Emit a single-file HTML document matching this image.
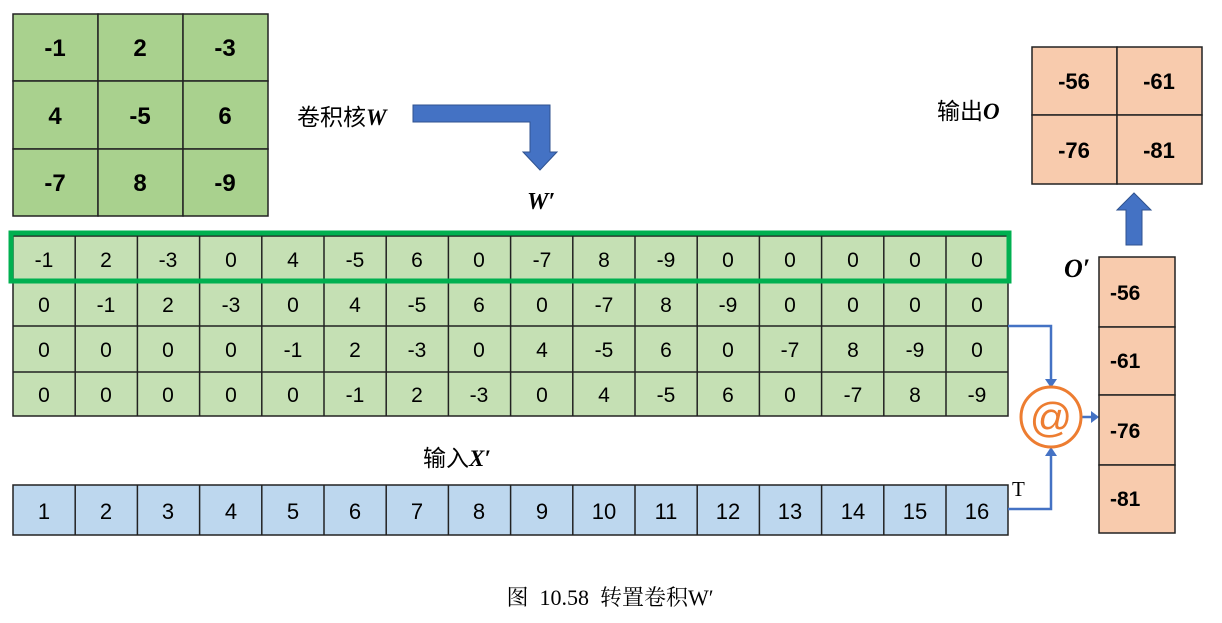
<!DOCTYPE html>
<html><head><meta charset="utf-8"><style>
body{margin:0;background:#fff;width:1222px;height:618px;overflow:hidden}
svg text{font-family:"Liberation Sans","Noto Sans CJK SC",sans-serif}
svg .s{font-family:"Liberation Serif","Noto Serif CJK SC",serif}
</style></head><body>
<svg width="1222" height="618" viewBox="0 0 1222 618" xmlns="http://www.w3.org/2000/svg">
<g stroke="#222" stroke-width="1.5" fill="#a9d18e">
<rect x="13" y="14" width="85" height="67"/><rect x="98" y="14" width="85" height="67"/><rect x="183" y="14" width="85" height="67"/>
<rect x="13" y="81" width="85" height="68"/><rect x="98" y="81" width="85" height="68"/><rect x="183" y="81" width="85" height="68"/>
<rect x="13" y="149" width="85" height="67"/><rect x="98" y="149" width="85" height="67"/><rect x="183" y="149" width="85" height="67"/>
</g>
<g font-size="24" font-weight="bold" text-anchor="middle">
<text x="55" y="56">-1</text><text x="140" y="56">2</text><text x="225" y="56">-3</text>
<text x="55" y="124">4</text><text x="140" y="124">-5</text><text x="225" y="124">6</text>
<text x="55" y="191">-7</text><text x="140" y="191">8</text><text x="225" y="191">-9</text>
</g>
<text x="297" y="125" font-size="23">卷积核<tspan class="s" font-weight="bold" font-style="italic">W</tspan></text>
<path d="M413 105 H550 V152 H557 L540 170 L523 152 H530 V122 H413 Z" fill="#4472c4" stroke="#2f528f" stroke-width="1"/>
<text class="s" x="527" y="209" font-size="24" font-weight="bold" font-style="italic">W′</text>
<rect x="13" y="236" width="995" height="180" fill="#c5e0b4" stroke="#222" stroke-width="1.5"/>
<g stroke="#222" stroke-width="1.5">
<path d="M13 282H1008M13 326H1008M13 372H1008"/>
<path d="M75.2 236V416M137.4 236V416M199.6 236V416M261.8 236V416M324 236V416M386.2 236V416M448.4 236V416M510.6 236V416M572.8 236V416M635 236V416M697.2 236V416M759.4 236V416M821.6 236V416M883.8 236V416M946 236V416"/>
</g>
<rect x="11" y="233" width="998" height="48" fill="none" stroke="#00b050" stroke-width="5"/>
<g font-size="21" text-anchor="middle">
<text y="267"><tspan x="44">-1</tspan><tspan x="106">2</tspan><tspan x="168">-3</tspan><tspan x="231">0</tspan><tspan x="293">4</tspan><tspan x="355">-5</tspan><tspan x="417">6</tspan><tspan x="479">0</tspan><tspan x="542">-7</tspan><tspan x="604">8</tspan><tspan x="666">-9</tspan><tspan x="728">0</tspan><tspan x="790">0</tspan><tspan x="853">0</tspan><tspan x="915">0</tspan><tspan x="977">0</tspan></text>
<text y="312"><tspan x="44">0</tspan><tspan x="106">-1</tspan><tspan x="168">2</tspan><tspan x="231">-3</tspan><tspan x="293">0</tspan><tspan x="355">4</tspan><tspan x="417">-5</tspan><tspan x="479">6</tspan><tspan x="542">0</tspan><tspan x="604">-7</tspan><tspan x="666">8</tspan><tspan x="728">-9</tspan><tspan x="790">0</tspan><tspan x="853">0</tspan><tspan x="915">0</tspan><tspan x="977">0</tspan></text>
<text y="357"><tspan x="44">0</tspan><tspan x="106">0</tspan><tspan x="168">0</tspan><tspan x="231">0</tspan><tspan x="293">-1</tspan><tspan x="355">2</tspan><tspan x="417">-3</tspan><tspan x="479">0</tspan><tspan x="542">4</tspan><tspan x="604">-5</tspan><tspan x="666">6</tspan><tspan x="728">0</tspan><tspan x="790">-7</tspan><tspan x="853">8</tspan><tspan x="915">-9</tspan><tspan x="977">0</tspan></text>
<text y="402"><tspan x="44">0</tspan><tspan x="106">0</tspan><tspan x="168">0</tspan><tspan x="231">0</tspan><tspan x="293">0</tspan><tspan x="355">-1</tspan><tspan x="417">2</tspan><tspan x="479">-3</tspan><tspan x="542">0</tspan><tspan x="604">4</tspan><tspan x="666">-5</tspan><tspan x="728">6</tspan><tspan x="790">0</tspan><tspan x="853">-7</tspan><tspan x="915">8</tspan><tspan x="977">-9</tspan></text>
</g>
<text x="423" y="466" font-size="23">输入<tspan class="s" font-weight="bold" font-style="italic">X′</tspan></text>
<rect x="13" y="485" width="995" height="50" fill="#bdd7ee" stroke="#222" stroke-width="1.5"/>
<path d="M75.2 485V535M137.4 485V535M199.6 485V535M261.8 485V535M324 485V535M386.2 485V535M448.4 485V535M510.6 485V535M572.8 485V535M635 485V535M697.2 485V535M759.4 485V535M821.6 485V535M883.8 485V535M946 485V535" stroke="#222" stroke-width="1.5"/>
<text y="519" font-size="22" text-anchor="middle"><tspan x="44">1</tspan><tspan x="106">2</tspan><tspan x="168">3</tspan><tspan x="231">4</tspan><tspan x="293">5</tspan><tspan x="355">6</tspan><tspan x="417">7</tspan><tspan x="479">8</tspan><tspan x="542">9</tspan><tspan x="604">10</tspan><tspan x="666">11</tspan><tspan x="728">12</tspan><tspan x="790">13</tspan><tspan x="853">14</tspan><tspan x="915">15</tspan><tspan x="977">16</tspan></text>
<text class="s" x="1012" y="496" font-size="21">T</text>
<g stroke="#4472c4" stroke-width="2.5" fill="none">
<path d="M1008 326H1051V380"/><path d="M1008 509H1051V455"/><path d="M1082 417H1092"/>
</g>
<g fill="#4472c4">
<path d="M1045 379H1057L1051 388Z"/><path d="M1045 456H1057L1051 447Z"/><path d="M1091 411V423L1099 417Z"/>
</g>
<circle cx="1051" cy="417" r="30" fill="#fff" stroke="#ed7d31" stroke-width="3"/>
<text x="1051" y="432" font-size="42" fill="#ed7d31" text-anchor="middle">@</text>
<text class="s" x="1064" y="277" font-size="26" font-weight="bold" font-style="italic">O′</text>
<g stroke="#222" stroke-width="1.5" fill="#f8cbad">
<rect x="1099" y="257" width="76" height="70"/><rect x="1099" y="327" width="76" height="68"/><rect x="1099" y="395" width="76" height="70"/><rect x="1099" y="465" width="76" height="68"/>
</g>
<g font-size="21" font-weight="bold"><text x="1110" y="300">-56</text><text x="1110" y="368">-61</text><text x="1110" y="438">-76</text><text x="1110" y="506">-81</text></g>
<path d="M1126 245V210H1117L1134 193L1151 210H1142V245Z" fill="#4472c4" stroke="#2f528f" stroke-width="1"/>
<g stroke="#222" stroke-width="1.5" fill="#f8cbad">
<rect x="1032" y="47" width="85" height="68"/><rect x="1117" y="47" width="85" height="68"/><rect x="1032" y="115" width="85" height="69"/><rect x="1117" y="115" width="85" height="69"/>
</g>
<g font-size="22" font-weight="bold" text-anchor="middle"><text x="1074" y="89">-56</text><text x="1159" y="89">-61</text><text x="1074" y="158">-76</text><text x="1159" y="158">-81</text></g>
<text x="937" y="119" font-size="23">输出<tspan class="s" font-weight="bold" font-style="italic">O</tspan></text>
<text class="s" x="610" y="605" font-size="22" text-anchor="middle" xml:space="preserve">图  10.58  转置卷积W′</text>
</svg>
</body></html>
